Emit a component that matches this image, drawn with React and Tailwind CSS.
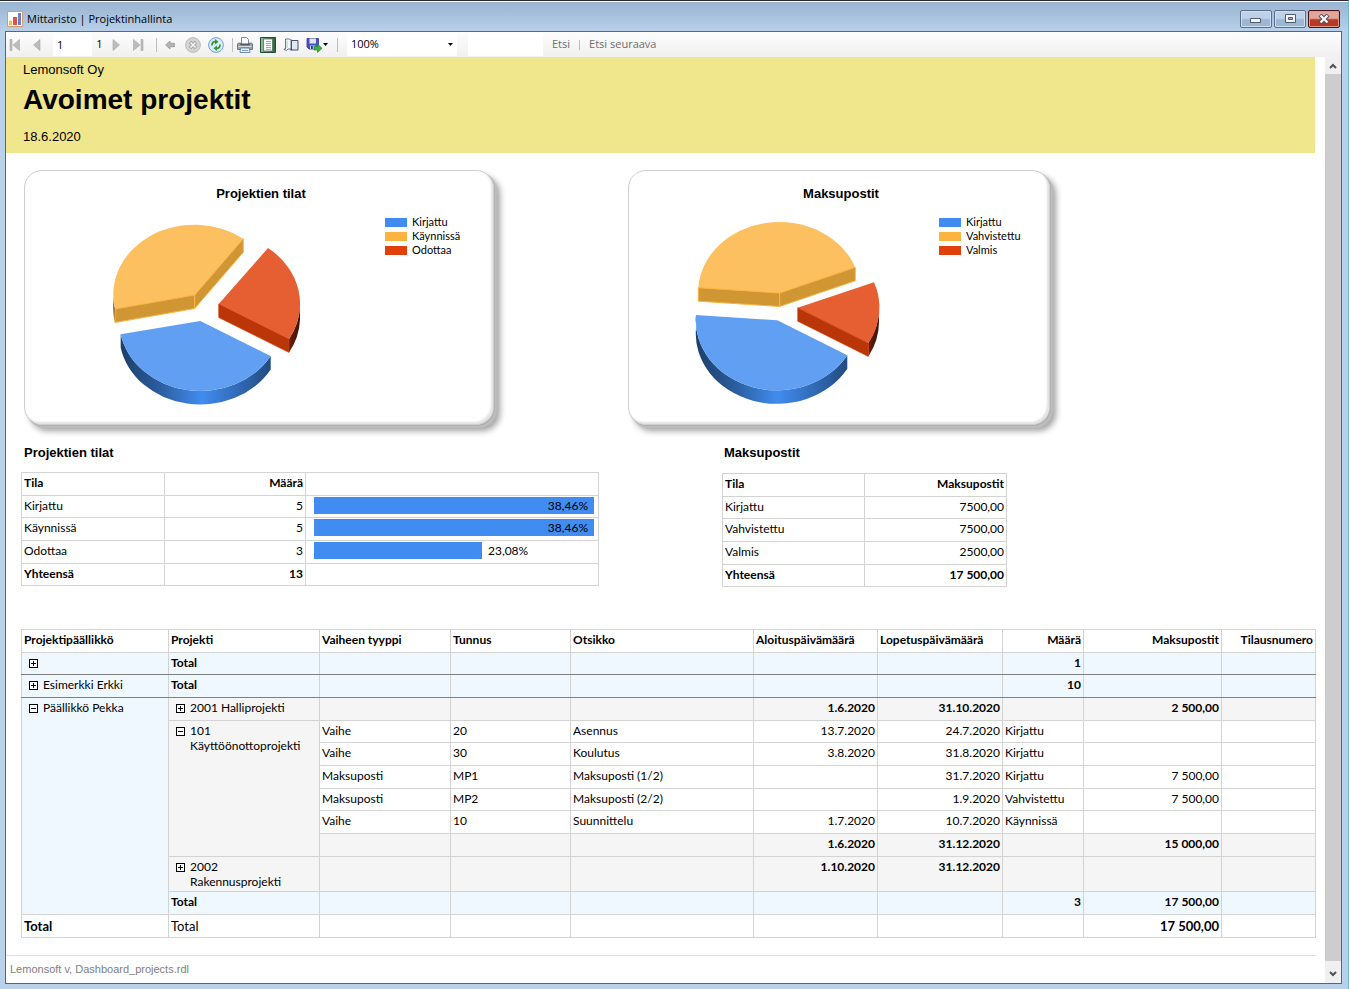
import { useState } from 'react';
import clsx from 'clsx';

const PIE_TOP = { blue: '#619ff2', orange: '#fcc060', red: '#e65f33' };

const STATUS_PIE = {
    id: 'status',
    viewBox: '108 217 200 193',
    blue: { c: [200.3, 321], a: [120.7, 334.3], b: [270.7, 356] },
    orange: { c: [194.7, 295], a: [115, 309], b: [243.3, 238.7], edge: [113.2, 296] },
    red: { c: [218.7, 304], a: [268, 248], b: [289, 339], edge: [300, 306] },
};

const PAYMENT_PIE = {
    id: 'payment',
    viewBox: '690 217 200 193',
    blue: { c: [777.3, 320.3], a: [696, 315], b: [847.3, 355.3] },
    orange: { c: [779.7, 293], a: [698.3, 287.7], b: [855.3, 267.3] },
    red: { c: [797.7, 307.7], a: [874, 282.3], b: [868.3, 343], edge: [879, 309] },
};

const LEGEND_COLORS = ['bg-[#418cf0]', 'bg-[#fcb441]', 'bg-[#e0400a]'];

const STATUS_ROWS = [
    { name: 'Kirjattu', count: 5, percent: '38,46%', width: 100 },
    { name: 'Käynnissä', count: 5, percent: '38,46%', width: 100 },
    { name: 'Odottaa', count: 3, percent: '23,08%', width: 60 },
];

const PAYMENT_ROWS = [
    ['Kirjattu', '7500,00'],
    ['Vahvistettu', '7500,00'],
    ['Valmis', '2500,00'],
];

const PHASES = [
    ['Vaihe', '20', 'Asennus', '13.7.2020', '24.7.2020', 'Kirjattu', ''],
    ['Vaihe', '30', 'Koulutus', '3.8.2020', '31.8.2020', 'Kirjattu', ''],
    ['Maksuposti', 'MP1', 'Maksuposti (1/2)', '', '31.7.2020', 'Kirjattu', '7 500,00'],
    ['Maksuposti', 'MP2', 'Maksuposti (2/2)', '', '1.9.2020', 'Vahvistettu', '7 500,00'],
    ['Vaihe', '10', 'Suunnittelu', '1.7.2020', '10.7.2020', 'Käynnissä', ''],
];

const CELL = 'border border-[#d3d3d3] px-0.5 pt-0.5 pb-0 align-top font-normal';
const HEAD = 'border border-[#d3d3d3] px-0.5 pt-0.5 pb-0 align-top font-bold';

// Report rows alternate between 23 and 22 pixels
const rowHeight = (i) => (i % 3 === 1 ? 'h-[22px]' : 'h-[23px]');

const DEPTH = 13.5;
const arc = (to, sweep) => `A81.2 70 0 0 ${sweep} ${to[0]} ${to[1]}`;
const down = (p) => [p[0], p[1] + DEPTH];

const Pie = ({ pie, label }) => {
    const { blue, orange, red } = pie;
    const wall = (from, to) => `M${from} L${to} L${down(to)} L${down(from)}Z`;
    return (
        <svg viewBox={pie.viewBox} className="mt-0.5 h-[193px] w-[200px] shrink-0" role="img" aria-label={label}>
            <defs>
                <linearGradient id={`${pie.id}-blue`}>
                    <stop offset="0" stopColor="#1d3f69" />
                    <stop offset="0.25" stopColor="#2a5b9c" />
                    <stop offset="0.54" stopColor="#418cf0" />
                    <stop offset="1" stopColor="#234b80" />
                </linearGradient>
                <linearGradient id={`${pie.id}-red`}>
                    <stop offset="0" stopColor="#6e1f05" />
                    <stop offset="1" stopColor="#3c1003" />
                </linearGradient>
            </defs>

            {orange.edge && (
                <path
                    d={`M${orange.edge} ${arc(orange.a, 0)} v${DEPTH} ${arc(down(orange.edge), 1)}Z`}
                    fill="#7d5a20"
                />
            )}
            <path d={`M${orange.c} L${orange.a} ${arc(orange.b, 1)}Z`} fill={PIE_TOP.orange} />
            <path d={wall(orange.a, orange.c)} fill="#d19634" stroke="#fcb441" strokeWidth="1" strokeLinejoin="round" />
            <path d={wall(orange.c, orange.b)} fill="#d19634" stroke="#fcb441" strokeWidth="1" strokeLinejoin="round" />

            <path
                d={`M${red.edge} ${arc(red.b, 1)} v${DEPTH} ${arc(down(red.edge), 0)}Z`}
                fill={`url(#${pie.id}-red)`}
            />
            <path d={`M${red.c} L${red.a} ${arc(red.b, 1)}Z`} fill={PIE_TOP.red} />
            <path d={wall(red.c, red.b)} fill="#ba3508" stroke="#d63d0a" strokeWidth="0.6" />

            <path
                d={`M${blue.a} ${arc(blue.b, 0)} v${DEPTH} ${arc(down(blue.a), 1)}Z`}
                fill={`url(#${pie.id}-blue)`}
            />
            <path d={`M${blue.c} L${blue.a} ${arc(blue.b, 0)}Z`} fill={PIE_TOP.blue} />
        </svg>
    );
};

const ChartCard = ({ title, pie, legend, className, legendClass }) => (
    <section
        className={clsx(
            'h-[255px] rounded-[18px] border border-[#cfcfcf] bg-white pt-3.5 shadow-[inset_-2px_-2px_2px_#e2e2e2,1px_1px_0_#b0b0b0,3px_3px_1px_#bdbdbd,6px_6px_6px_#a0a0a0]',
            className
        )}
    >
        <h2 className="text-center text-[13px] leading-[18px] font-bold">{title}</h2>
        <div className="mt-3 flex">
            <Pie pie={pie} label={title} />
            <ul className={clsx("font-['Lato',sans-serif] text-[11px] leading-[14px]", legendClass)}>
                {legend.map((name, i) => (
                    <li key={name} className="flex items-center gap-[5px]">
                        <span className={clsx('h-[9px] w-[22px]', LEGEND_COLORS[i])} />
                        {name}
                    </li>
                ))}
            </ul>
        </div>
    </section>
);

const Toggle = ({ open, label, children }) => {
    const [isOpen, setIsOpen] = useState(open);
    return (
        <div className="flex items-start gap-[5px] pr-2 pl-[5px]">
            <button
                type="button"
                aria-label={label}
                aria-expanded={isOpen}
                onClick={() => setIsOpen(!isOpen)}
                className="mt-1 shrink-0"
            >
                <svg viewBox="0 0 9 9" className="block h-[9px] w-[9px]" shapeRendering="crispEdges">
                    <path d="M0.5 0.5h8v8h-8z" fill="#fff" stroke="#000" />
                    <path d={isOpen ? 'M2 4.5h5' : 'M2 4.5h5M4.5 2v5'} stroke="#000" />
                </svg>
            </button>
            <span>{children}</span>
        </div>
    );
};

const ToolButton = ({ label, className = 'w-[23px]', children }) => (
    <button type="button" aria-label={label} className={clsx('flex h-full items-center justify-center', className)}>
        {children}
    </button>
);

const Separator = () => <span className="mr-px ml-[5px] h-3.5 w-px bg-[#bdbdbd]" />;

const Toolbar = () => (
    <div className="flex h-[25px] items-center bg-linear-to-b from-[#fdfdfd] to-[#f0f0f0] font-['Open_Sans',sans-serif] text-[11px]">
        <ToolButton label="Ensimmäinen sivu" className="w-[18px]">
            <svg viewBox="0 0 12 12" className="size-3" fill="#bcbcbc" stroke="#a6a6a6" strokeWidth="0.6">
                <path d="M1 0.5h2v11H1zM10.5 0.5v11L4 6z" />
            </svg>
        </ToolButton>
        <ToolButton label="Edellinen sivu" className="w-[26px]">
            <svg viewBox="0 0 12 12" className="size-3" fill="#bcbcbc" stroke="#a6a6a6" strokeWidth="0.6">
                <path d="M9 0.5v11L2.5 6z" />
            </svg>
        </ToolButton>
        <input aria-label="Sivu" defaultValue="1" className="ml-[3px] h-[23px] w-[39px] bg-white pl-1 outline-none" />
        <span className="w-[15px] text-center">1</span>
        <ToolButton label="Seuraava sivu" className="w-[18px]">
            <svg viewBox="0 0 12 12" className="size-3" fill="#bcbcbc" stroke="#a6a6a6" strokeWidth="0.6">
                <path d="M3 0.5v11L9.5 6z" />
            </svg>
        </ToolButton>
        <ToolButton label="Viimeinen sivu" className="w-[26px]">
            <svg viewBox="0 0 12 12" className="size-3" fill="#bcbcbc" stroke="#a6a6a6" strokeWidth="0.6">
                <path d="M1.5 0.5v11L8 6zM9 0.5h2v11H9z" />
            </svg>
        </ToolButton>
        <Separator />
        <ToolButton label="Takaisin">
            <svg viewBox="0 0 10 10" className="size-2.5" fill="#b5b5b5" stroke="#979797" strokeWidth="0.8">
                <path d="M0.6 5L5 1v2.3h4.4v3.400H5V9z" />
            </svg>
        </ToolButton>
        <ToolButton label="Pysäytä">
            <svg viewBox="0 0 16 16" className="size-4">
                <circle cx="8" cy="8" r="7.4" fill="#d4d4d4" stroke="#bababa" />
                <path d="M5 5l6 6M11 5l-6 6" stroke="#a3a3a3" strokeWidth="3.4" />
                <path d="M5.5 5.5l5 5M10.5 5.5l-5 5" stroke="#f4f4f4" strokeWidth="1.7" />
            </svg>
        </ToolButton>
        <ToolButton label="Päivitä">
            <svg viewBox="0 0 16 16" className="size-4">
                <circle cx="8" cy="8" r="7.4" fill="#dcecfc" stroke="#6f9fd6" />
                <path d="M4 8.5Q3.800 4.800 7.500 4.700" fill="none" stroke="#2a9a33" strokeWidth="1.7" />
                <path d="M7 2L10.500 4.800 7 7.500z" fill="#2a9a33" />
                <path d="M12 7.500q.2 3.700-3.500 3.800" fill="none" stroke="#2a9a33" strokeWidth="1.7" />
                <path d="M9 14L5.500 11.200 9 8.500z" fill="#2a9a33" />
            </svg>
        </ToolButton>
        <Separator />
        <ToolButton label="Tulosta" className="w-[22px]">
            <svg viewBox="0 0 16 16" className="size-4">
                <path d="M4.5 0.5h5l2 2v5h-7z" fill="#f7f9fc" stroke="#7c8795" />
                <path d="M1.500 6h2v2h9V6h2l1 1v5.500H0.500V7z" fill="#9aa2ac" stroke="#5b646f" strokeWidth="0.8" />
                <path d="M4 6.500h8V8H4z" fill="#4f5863" />
                <path d="M1.500 9.500h13" stroke="#d7dbe0" />
                <path d="M3.5 11h9l.5 4.500H3z" fill="#e4effb" stroke="#5c738f" strokeWidth="0.8" />
                <path d="M5 13.500h6" stroke="#69a3e2" />
            </svg>
        </ToolButton>
        <ToolButton label="Tulostusasettelu">
            <svg viewBox="0 0 16 16" className="size-4">
                <defs>
                    <linearGradient id="layout-frame">
                        <stop offset="0" stopColor="#8cc98f" />
                        <stop offset="1" stopColor="#2c6438" />
                    </linearGradient>
                </defs>
                <path d="M0.5 0.5h15v15h-15z" fill="url(#layout-frame)" stroke="#254a33" />
                <path d="M3.500 2h9v12h-9z" fill="#fff" stroke="#3c6850" strokeWidth="0.7" />
                <path d="M6 4.5h5M6 6.5h5M6 8.500h5M6 10.500h5M6 12.300h5" stroke="#7d93ab" strokeWidth="0.8" />
            </svg>
        </ToolButton>
        <ToolButton label="Sivun asetukset">
            <svg viewBox="0 0 16 16" className="size-4">
                <path d="M8.500 3.500h6.500v9.500H8.500z" fill="#dfe9f4" stroke="#46546a" />
                <path d="M8 2.500v11" stroke="#2f3947" strokeWidth="1.2" />
                <path d="M2.500 2h4l1.500 1.500v8.500H5L3.500 13.500l-2.500-1V12h1.500z" fill="#f5f8fb" stroke="#5d6a7b" strokeWidth="0.9" />
                <path d="M4 3.500v7.500" stroke="#b8c3cf" />
            </svg>
        </ToolButton>
        <ToolButton label="Vie" className="w-[30px]">
            <svg viewBox="0 0 17 16" className="h-4 w-[17px]">
                <path d="M1 1.500h11.500V12H3l-2-2z" fill="#4c4fc0" stroke="#3033a0" strokeWidth="0.8" />
                <path d="M3.5 1.500h6.500v5H3.500z" fill="#dfe3f7" />
                <path d="M4 8.500h5.500V12H4z" fill="#c9cdec" />
                <path d="M5 9h1.800v3H5z" fill="#3033a0" />
                <path d="M8 9.500h3.500V7L16 11.300 11.500 15.500V13H8z" fill="#3bb13f" stroke="#1f8a28" strokeWidth="0.7" />
            </svg>
            <svg viewBox="0 0 5 3" className="h-[3px] w-[5px]">
                <path d="M0 0h5L2.5 3z" />
            </svg>
        </ToolButton>
        <Separator />
        <div className="relative ml-2 h-[23px]">
            <select aria-label="Zoomaus" className="h-full w-[110px] appearance-none bg-white pl-1 outline-none">
                <option>100%</option>
            </select>
            <svg viewBox="0 0 5 3" className="pointer-events-none absolute top-2.5 right-1 h-[3px] w-[5px]">
                <path d="M0 0h5L2.5 3z" />
            </svg>
        </div>
        <input aria-label="Etsittävä teksti" className="ml-[11px] h-[23px] w-[75px] bg-white px-1 outline-none" />
        <button type="button" className="ml-[9px] text-[#6d6d6d]">Etsi</button>
        <span className="mx-[9px] h-2.5 w-px bg-[#bdbdbd]" />
        <button type="button" className="text-[#6d6d6d]">Etsi seuraava</button>
    </div>
);

const WindowButton = ({ label, close, children }) => (
    <button
        type="button"
        aria-label={label}
        className={clsx(
            'flex h-[18px] w-8 items-center justify-center rounded-[2px] border',
            close
                ? 'border-[#4a1219] bg-linear-to-b from-[#e3a69b] from-45% to-[#b93a22] to-55% shadow-[inset_0_0_0_1px_#dc9a8e]'
                : 'border-[#5b6f8c] bg-linear-to-b from-[#bdd1e8] from-45% to-[#9cb6d3] to-55% shadow-[inset_0_0_0_1px_#cfdff0]'
        )}
    >
        {children}
    </button>
);

const TitleBar = () => (
    <header className="flex h-[29px] items-center px-0.5">
        <svg viewBox="0 0 16 16" className="mt-1 size-4">
            <path d="M0.5 0.5h15v15h-15z" fill="#fff" stroke="#d79a70" />
            <path d="M2 9.5h3V14H2z" fill="#f6c52c" />
            <path d="M6 6h4v8H6z" fill="#e2504a" />
            <path d="M11 2h3v12h-3z" fill="#6c7fc0" />
        </svg>
        <h1 className="mt-1.5 ml-1 font-['Open_Sans',sans-serif] text-[11px]">Mittaristo | Projektinhallinta</h1>
        <div className="mt-1 ml-auto flex gap-0.5">
            <WindowButton label="Pienennä">
                <svg viewBox="0 0 12 5" className="mt-1 h-[5px] w-3">
                    <path d="M0.5 0.5h10v4h-10z" fill="#f6f6f6" stroke="#4f5b6e" />
                </svg>
            </WindowButton>
            <WindowButton label="Suurenna">
                <svg viewBox="0 0 11 9" className="h-[9px] w-[11px]">
                    <path d="M0.5 0.5h10v8h-10z" fill="#f6f6f6" stroke="#4f5b6e" />
                    <path d="M3.5 3.5h4v2h-4z" fill="#9db6d3" stroke="#4f5b6e" />
                </svg>
            </WindowButton>
            <WindowButton label="Sulje" close>
                <svg viewBox="0 0 12 10" className="h-2.5 w-3">
                    <path d="M2 1l8 8M10 1L2 9" stroke="#4d4a55" strokeWidth="4.2" />
                    <path d="M2.5 1.5l7 7M9.5 1.5l-7 7" stroke="#f4f4f4" strokeWidth="2.4" />
                </svg>
            </WindowButton>
        </div>
    </header>
);

const StatusTable = () => (
    <table className="w-[578px] table-fixed border-collapse">
        <colgroup>
            <col className="w-[143px]" />
            <col className="w-[141px]" />
            <col />
        </colgroup>
        <thead>
            <tr className={rowHeight(0)}>
                <th className={clsx(HEAD, 'text-left')}>Tila</th>
                <th className={clsx(HEAD, 'text-right')}>Määrä</th>
                <td className={CELL} />
            </tr>
        </thead>
        <tbody>
            {STATUS_ROWS.map((row, i) => (
                <tr key={row.name} className={rowHeight(i + 1)}>
                    <td className={CELL}>{row.name}</td>
                    <td className={clsx(CELL, 'text-right')}>{row.count}</td>
                    <td className="border border-[#d3d3d3] pt-px pr-1 pl-2 align-top">
                        <div className="flex items-center">
                            <div
                                className="h-[17px] bg-[#418cf0] pr-1.5 text-right leading-[17px]"
                                style={{ width: `${row.width}%` }}
                            >
                                {row.width === 100 && row.percent}
                            </div>
                            {row.width < 100 && <span className="ml-1.5">{row.percent}</span>}
                        </div>
                    </td>
                </tr>
            ))}
            <tr className={rowHeight(4)}>
                <th className={clsx(HEAD, 'text-left')}>Yhteensä</th>
                <td className={clsx(HEAD, 'text-right')}>13</td>
                <td className={CELL} />
            </tr>
        </tbody>
    </table>
);

const PaymentTable = () => (
    <table className="w-[285px] table-fixed border-collapse">
        <thead>
            <tr className={rowHeight(0)}>
                <th className={clsx(HEAD, 'text-left')}>Tila</th>
                <th className={clsx(HEAD, 'text-right')}>Maksupostit</th>
            </tr>
        </thead>
        <tbody>
            {PAYMENT_ROWS.map(([name, sum], i) => (
                <tr key={name} className={rowHeight(i + 1)}>
                    <td className={CELL}>{name}</td>
                    <td className={clsx(CELL, 'text-right')}>{sum}</td>
                </tr>
            ))}
            <tr className={rowHeight(4)}>
                <th className={clsx(HEAD, 'text-left')}>Yhteensä</th>
                <td className={clsx(HEAD, 'text-right')}>17 500,00</td>
            </tr>
        </tbody>
    </table>
);

// Everything to the right of the project column in a subtotal row
const SubtotalCells = ({ start, end, count, sum, className }) => (
    <>
        {['', '', '', start, end, count, sum, ''].map((value, i) => (
            <td key={i} className={clsx(HEAD, 'text-right', className)}>{value}</td>
        ))}
    </>
);

const ProjectTable = () => (
    <table className="w-full table-fixed border-collapse">
        <colgroup>
            <col className="w-[147px]" />
            <col className="w-[151px]" />
            <col className="w-[131px]" />
            <col className="w-[120px]" />
            <col className="w-[183px]" />
            <col className="w-[124px]" />
            <col className="w-[125px]" />
            <col className="w-[81px]" />
            <col className="w-[138px]" />
            <col className="w-[94px]" />
        </colgroup>
        <thead>
            <tr className={rowHeight(0)}>
                {['Projektipäällikkö', 'Projekti', 'Vaiheen tyyppi', 'Tunnus', 'Otsikko', 'Aloituspäivämäärä', 'Lopetuspäivämäärä'].map((h) => (
                    <th key={h} className={clsx(HEAD, 'text-left')}>{h}</th>
                ))}
                {['Määrä', 'Maksupostit', 'Tilausnumero'].map((h) => (
                    <th key={h} className={clsx(HEAD, 'text-right')}>{h}</th>
                ))}
            </tr>
        </thead>
        <tbody>
            <tr className={clsx('bg-[#f0f8ff]', rowHeight(1))}>
                <td className={clsx(CELL, 'border-b-[#808080]')}><Toggle open={false} label="Laajenna" /></td>
                <td className={clsx(HEAD, 'border-b-[#808080]')}>Total</td>
                <SubtotalCells count="1" className="border-b-[#808080]" />
            </tr>
            <tr className={clsx('bg-[#f0f8ff]', rowHeight(2))}>
                <td className={clsx(CELL, 'border-y-[#808080]')}><Toggle open={false} label="Laajenna">Esimerkki Erkki</Toggle></td>
                <td className={clsx(HEAD, 'border-y-[#808080]')}>Total</td>
                <SubtotalCells count="10" className="border-y-[#808080]" />
            </tr>
            <tr className={clsx('bg-[#f5f5f5]', rowHeight(3))}>
                <td rowSpan={9} className={clsx(CELL, 'border-t-[#808080] bg-[#f0f8ff]')}><Toggle open label="Supista">Päällikkö Pekka</Toggle></td>
                <td className={clsx(CELL, 'border-t-[#808080]')}><Toggle open={false} label="Laajenna">2001 Halliprojekti</Toggle></td>
                <SubtotalCells start="1.6.2020" end="31.10.2020" sum="2 500,00" className="border-t-[#808080]" />
            </tr>
            {PHASES.map(([type, code, title, start, end, state, sum], i) => (
                <tr key={code} className={rowHeight(i + 4)}>
                    {i === 0 && (
                        <td rowSpan={6} className={clsx(CELL, 'bg-[#f5f5f5]')}>
                            <Toggle open label="Supista">101 Käyttöönottoprojekti</Toggle>
                        </td>
                    )}
                    <td className={CELL}>{type}</td>
                    <td className={CELL}>{code}</td>
                    <td className={CELL}>{title}</td>
                    <td className={clsx(CELL, 'text-right')}>{start}</td>
                    <td className={clsx(CELL, 'text-right')}>{end}</td>
                    <td className={CELL}>{state}</td>
                    <td className={clsx(CELL, 'text-right')}>{sum}</td>
                    <td className={CELL} />
                </tr>
            ))}
            <tr className={clsx('bg-[#f5f5f5]', rowHeight(9))}>
                <SubtotalCells start="1.6.2020" end="31.12.2020" sum="15 000,00" />
            </tr>
            <tr className="h-[35px] bg-[#f5f5f5]">
                <td className={CELL}><Toggle open={false} label="Laajenna">2002 Rakennusprojekti</Toggle></td>
                <SubtotalCells start="1.10.2020" end="31.12.2020" />
            </tr>
            <tr className={clsx('bg-[#f0f8ff]', rowHeight(11))}>
                <td className={HEAD}>Total</td>
                <SubtotalCells count="3" sum="17 500,00" />
            </tr>
            <tr className={clsx('text-[13px] leading-[18px]', rowHeight(12))}>
                <td className={HEAD}>Total</td>
                <td className={CELL}>Total</td>
                <SubtotalCells sum="17 500,00" />
            </tr>
        </tbody>
    </table>
);

const ScrollBar = () => (
    <div className="flex w-4 shrink-0 flex-col bg-[#cdcdcd]">
        <button type="button" aria-label="Vieritä ylös" className="flex h-[17px] items-center justify-center bg-[#f0f0f0]">
            <svg viewBox="0 0 8 6" className="h-1.5 w-2" fill="none" stroke="#505050" strokeWidth="2">
                <path d="M1 5l3-3 3 3" />
            </svg>
        </button>
        <button type="button" aria-label="Vieritä alas" className="mt-auto flex h-[22px] items-center justify-center bg-[#f0f0f0] pt-1">
            <svg viewBox="0 0 8 6" className="h-1.5 w-2" fill="none" stroke="#505050" strokeWidth="2">
                <path d="M1 1l3 3 3-3" />
            </svg>
        </button>
    </div>
);

const App = () => (
    <div className="flex min-h-screen flex-col border-t border-r border-t-[#2a2833] border-r-[#35d0e6] bg-[#b9d1ea] font-['Liberation_Sans',Arial,sans-serif] text-black">
        <div className="flex flex-1 flex-col border-t border-white bg-linear-to-b from-[#99b4d1] to-[#b9d1ea] to-[30px] pr-1.5 pb-[5px] pl-[5px]">
            <TitleBar />
            <div className="flex flex-1 flex-col border border-[#5f656e] bg-white">
                <Toolbar />
                <div className="flex flex-1">
                    <main className="flex min-w-0 flex-1 flex-col">
                        <div className="mr-2.5 h-24 bg-[#f0e68c] pl-[17px] text-[13px]">
                            <p className="pt-1 leading-[18px]">Lemonsoft Oy</p>
                            <p className="mt-1 text-[28px] leading-[34px] font-bold">Avoimet projektit</p>
                            <p className="mt-[11px] leading-[18px]">18.6.2020</p>
                        </div>

                        <div className="mt-[17px] flex gap-[134px] pl-[18px]">
                            <ChartCard
                                title="Projektien tilat"
                                pie={STATUS_PIE}
                                legend={['Kirjattu', 'Käynnissä', 'Odottaa']}
                                className="w-[470px] pl-[83px] [&>h2]:-ml-[79px]"
                                legendClass="ml-[77px]"
                            />
                            <ChartCard
                                title="Maksupostit"
                                pie={PAYMENT_PIE}
                                legend={['Kirjattu', 'Vahvistettu', 'Valmis']}
                                className="w-[422px] pl-[61px] [&>h2]:-ml-[57px]"
                                legendClass="ml-[49px]"
                            />
                        </div>

                        <div className="pr-[9px] pl-[15px] font-['Lato',sans-serif] text-xs leading-[15px]">
                            <div className="mt-[19px] flex gap-[123px]">
                                <section>
                                    <h2 className="mb-2.5 pl-[3px] font-['Liberation_Sans',Arial,sans-serif] text-[13px] leading-[18px] font-bold">Projektien tilat</h2>
                                    <StatusTable />
                                </section>
                                <section>
                                    <h2 className="mb-[11px] pl-0.5 font-['Liberation_Sans',Arial,sans-serif] text-[13px] leading-[18px] font-bold">Maksupostit</h2>
                                    <PaymentTable />
                                </section>
                            </div>
                            <div className="mt-[42px]">
                                <ProjectTable />
                            </div>
                        </div>

                        <footer className="mt-[17px] mr-2 border-t border-[#f0e68c] pt-1 pl-1 text-[11px] leading-[18px] text-[#808080]">
                            Lemonsoft v, Dashboard_projects.rdl
                        </footer>
                    </main>
                    <ScrollBar />
                </div>
            </div>
        </div>
    </div>
);

export default App;
